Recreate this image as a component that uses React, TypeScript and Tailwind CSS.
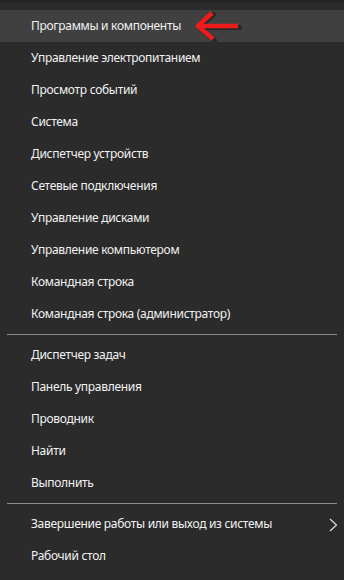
import React from 'react';

const groups: string[][] = [
  [
    'Программы и компоненты',
    'Управление электропитанием',
    'Просмотр событий',
    'Система',
    'Диспетчер устройств',
    'Сетевые подключения',
    'Управление дисками',
    'Управление компьютером',
    'Командная строка',
    'Командная строка (администратор)',
  ],
  ['Диспетчер задач', 'Панель управления', 'Проводник', 'Найти', 'Выполнить'],
  ['Завершение работы или выход из системы', 'Рабочий стол'],
];

const RedArrow = () => (
  <svg width="56" height="32" viewBox="0 0 56 32" className="absolute left-[190px] top-0">
    <g stroke="#150808" strokeOpacity="0.45" strokeWidth="5" strokeLinecap="round" strokeLinejoin="round" fill="none" transform="translate(1.5 1.5)">
      <path d="M48 16 H9" />
      <path d="M22 3 L8 16 L23 29" />
    </g>
    <g stroke="#ec1c1c" strokeWidth="4.5" strokeLinecap="butt" strokeLinejoin="round" fill="none">
      <path d="M48 16 H9" />
      <path d="M22 3 L8 16 L23 29" />
    </g>
  </svg>
);

const App: React.FC = () => {
  return (
    <div className="w-[344px] h-[580px] bg-[#2b2b2b] overflow-hidden font-['Noto_Sans','Open_Sans',sans-serif] text-[12px] tracking-[-0.3px] text-[#f2f2f2]">
      <div className="h-[3px] bg-[#242424]" />
      <div className="h-[7px]" />
      {groups.map((g, gi) => (
        <div key={gi}>
          {gi > 0 && (
            <div className="py-[4px] px-[7px]">
              <div className="h-px bg-[#8c8c8c]" />
            </div>
          )}
          {g.map((item, i) => {
            const active = gi === 0 && i === 0;
            const sub = gi === 2 && i === 0;
            return (
              <div
                key={item}
                className={`relative h-[32px] flex items-center pl-[31px] pr-[8px] ${active ? 'bg-[#404040]' : ''}`}
              >
                <span>{item}</span>
                {active && <RedArrow />}
                {sub && (
                  <svg width="9" height="14" viewBox="0 0 9 14" className="absolute left-[329px] top-[10px]">
                    <path d="M1 1 L7.5 7 L1 13" stroke="#e0e0e0" strokeWidth="1.2" fill="none" />
                  </svg>
                )}
              </div>
            );
          })}
        </div>
      ))}
    </div>
  );
};

export default App;
